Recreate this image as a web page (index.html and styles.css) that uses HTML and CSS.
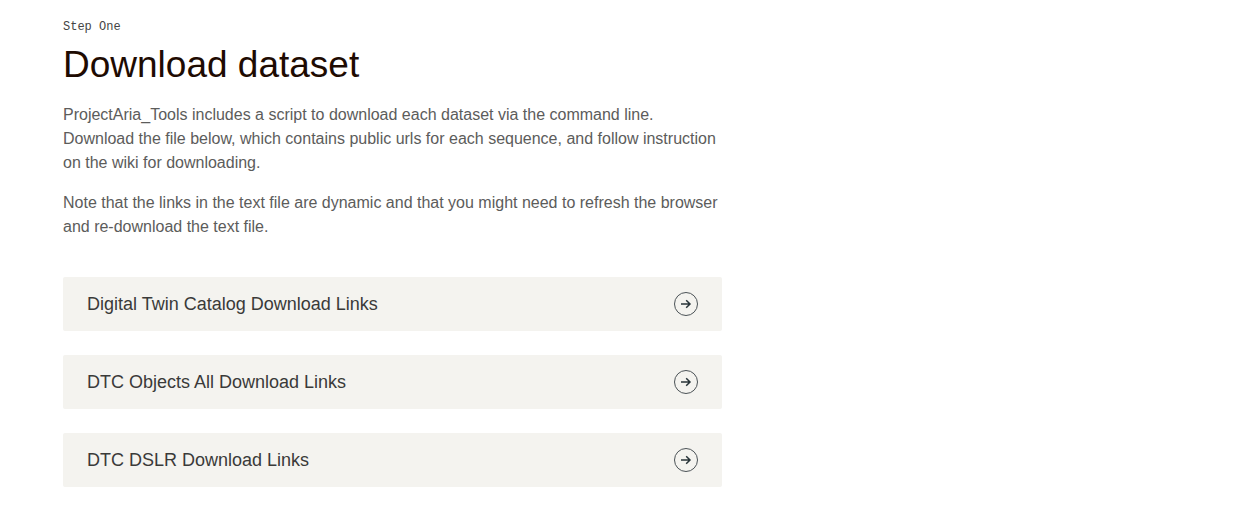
FILE: index.html
```html
<!DOCTYPE html>
<html lang="en">
<head>
<meta charset="utf-8">
<meta name="viewport" content="width=device-width, initial-scale=1">
<title>Download dataset</title>
<link rel="stylesheet" href="styles.css">
</head>
<body>
<main class="page">
  <section class="step">
    <p class="eyebrow">Step One</p>
    <h1 class="title">Download dataset</h1>
    <div class="copy">
      <p>ProjectAria_Tools includes a script to download each dataset via the command line. Download the file below, which contains public urls for each sequence, and follow instruction on the wiki for downloading.</p>
      <p>Note that the links in the text file are dynamic and that you might need to refresh the browser and re-download the text file.</p>
    </div>
    <nav class="links" aria-label="Dataset downloads">
      <a class="link" href="#digital-twin-catalog"><span>Digital Twin Catalog Download Links</span>
        <svg class="arrow" viewBox="0 0 24 24" aria-hidden="true"><circle cx="12" cy="12" r="11.5"/><path d="M7 12h9M12.2 8.2l3.8 3.8-3.8 3.8"/></svg></a>
      <a class="link" href="#dtc-objects"><span>DTC Objects All Download Links</span>
        <svg class="arrow" viewBox="0 0 24 24" aria-hidden="true"><circle cx="12" cy="12" r="11.5"/><path d="M7 12h9M12.2 8.2l3.8 3.8-3.8 3.8"/></svg></a>
      <a class="link" href="#dtc-dslr"><span>DTC DSLR Download Links</span>
        <svg class="arrow" viewBox="0 0 24 24" aria-hidden="true"><circle cx="12" cy="12" r="11.5"/><path d="M7 12h9M12.2 8.2l3.8 3.8-3.8 3.8"/></svg></a>
    </nav>
  </section>
</main>
</body>
</html>
```
FILE: styles.css
```css
* { box-sizing: border-box; }
body { margin: 0; background: #fff; color: #5c5c5b; font-family: "Liberation Sans", Arial, sans-serif; }
.page { padding: 19px 63px 40px; }
.step { max-width: 659px; }
.eyebrow { margin: 0; font: 12px/16px "Liberation Mono", monospace; color: #444; }
.title { margin: 8px 0 16px; font-size: 37px; line-height: 44px; font-weight: 400; color: #1e0b02; }
.copy { font-size: 16px; line-height: 24px; }
.copy p { margin: 0 0 16px; }
.links { display: flex; flex-direction: column; gap: 24px; margin-top: 38px; }
.link { display: flex; align-items: center; justify-content: space-between; padding: 15px 24px; border-radius: 2px; background: #f4f3ef; color: #3a3a39; font-size: 18px; line-height: 24px; text-decoration: none; }
.arrow { flex: none; width: 24px; height: 24px; fill: none; stroke: #4b5256; }
.arrow path { stroke: #283439; stroke-width: 1.5; }
```
